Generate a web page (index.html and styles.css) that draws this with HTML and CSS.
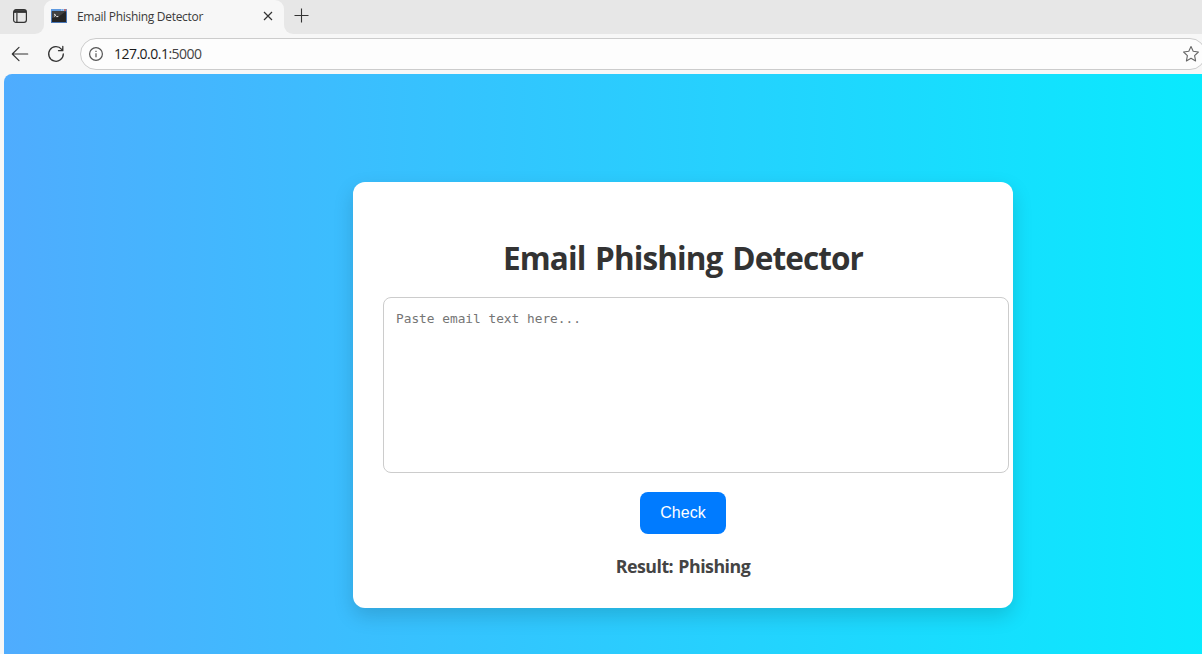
FILE: index.html
```
<!DOCTYPE html>
<html lang="en">
<head>
<meta charset="utf-8">
<title>Email Phishing Detector</title>
<link rel="stylesheet" href="styles.css">
</head>
<body>
<header class="tabstrip">
  <div class="tab-actions">
    <svg class="icon" width="16" height="16" viewBox="0 0 16 16" fill="none" stroke="#333" stroke-width="1.2"><rect x="1.6" y="1.6" width="12.8" height="12.8" rx="2.4"/><path d="M4.9 5v9.4"/><path d="M2 3.5h12" stroke-width="2.8"/></svg>
  </div>
  <div class="tab">
    <svg class="favicon" width="16" height="14" viewBox="0 0 16 14"><rect width="16" height="14" fill="#4a78b8"/><rect width="16" height="2.3" fill="#5f9ae0"/><path d="M10 .5h1.5v1H10zM12 .5h1v1h-1z" fill="#d5e5f8"/><path d="M13 .3h2.2v1.5H13z" fill="#d95b4c"/><rect x="1" y="2.3" width="14" height="10.7" fill="#252525"/><path d="M1 2.3h14L7 8 1 9z" fill="#414141"/><path d="M3 5l1.8 1.2L3 7.4M5.3 7.6h2" stroke="#fff" fill="none" stroke-width=".9"/></svg>
    <span class="tab-title">Email Phishing Detector</span>
    <svg class="close" width="10" height="10" viewBox="0 0 10 10" fill="none" stroke="#333" stroke-width="1.2"><path d="M1 1l8 8M9 1L1 9"/></svg>
  </div>
  <div class="new-tab">
    <svg class="icon" width="15" height="15" viewBox="0 0 15 15" fill="none" stroke="#333" stroke-width="1.1"><path d="M7.5 .5v14M.5 7.5h14"/></svg>
  </div>
</header>
<nav class="toolbar">
  <svg class="back" width="18" height="16" viewBox="0 0 18 16" fill="none" stroke="#333" stroke-width="1.2" stroke-linecap="round" stroke-linejoin="round"><path d="M8 1.4L1.3 8 8 14.6M1.3 8h15.4"/></svg>
  <svg class="reload" width="18" height="18" viewBox="0 0 18 18" fill="none" stroke="#333" stroke-width="1.3" stroke-linecap="round" stroke-linejoin="round"><path d="M16.3 9A7.3 7.3 0 1 1 14.6 4.3L15.8 5.6M15.8 1.4v4.3h-4.3"/></svg>
  <div class="address">
    <svg class="icon" width="14" height="14" viewBox="0 0 14 14" fill="none" stroke="#555" stroke-width="1.2"><circle cx="7" cy="7" r="6.4"/><path d="M7 6.2v4.1M7 3.7v1.3"/></svg>
    <span class="url">127.0.0.1<span class="port">:5000</span></span>
    <svg class="star" width="18" height="18" viewBox="0 0 18 18" fill="none" stroke="#666" stroke-width="1.1" stroke-linejoin="round"><path d="M9 1.6l2.2 4.7 5.2.7-3.8 3.6 1 5.3L9 13.3l-4.6 2.6 1-5.3L1.6 7l5.2-.7z"/></svg>
  </div>
</nav>
<main class="page">
  <section class="card">
    <h1>Email Phishing Detector</h1>
    <textarea placeholder="Paste email text here..."></textarea>
    <button class="check">Check</button>
    <p class="result">Result: Phishing</p>
  </section>
</main>
</body>
</html>
```
FILE: styles.css
```
* { box-sizing: border-box; }
body {
  margin: 0;
  height: 654px;
  overflow: hidden;
  background: #f7f7f7;
  font-family: "Open Sans", "Noto Sans", sans-serif;
}
svg { display: block; flex: none; }
.tabstrip {
  display: flex;
  height: 34px;
  background: linear-gradient(#e7e7e7 50%, #f7f7f7 50%);
}
.tab-actions {
  width: 44px;
  padding: 8px 0 0 12px;
  background: #e7e7e7;
  border-bottom-right-radius: 9px;
}
.tab {
  display: flex;
  align-items: center;
  width: 240px;
  padding: 0 11px 2px 7px;
  background: #f7f7f7;
  border-radius: 9px 9px 0 0;
}
.tab-title {
  flex: 1;
  margin-left: 10px;
  padding-top: 1px;
  font-size: 12px;
  letter-spacing: -0.3px;
  line-height: 16px;
  color: #3b3b3b;
  white-space: nowrap;
}
.new-tab {
  flex: 1;
  padding: 8px 0 0 10px;
  background: #e7e7e7;
  border-bottom-left-radius: 9px;
}
.toolbar {
  display: flex;
  align-items: center;
  height: 40px;
  padding-left: 11px;
}
.reload { margin-left: 18px; }
.address {
  display: flex;
  flex: none;
  align-items: center;
  width: 1126px;
  height: 32px;
  margin-left: 15px;
  padding-left: 8px;
  border: 1px solid #ccc;
  border-radius: 16px;
  background: #fdfdfd;
}
.url {
  width: 1068px;
  margin-left: 11px;
  font-size: 14px;
  letter-spacing: -0.52px;
  line-height: 20px;
  color: #1b1b1b;
}
.port { color: #444; }
.page {
  height: 580px;
  margin-left: 4px;
  padding: 108px 0 0 349px;
  border-top-left-radius: 8px;
  background: linear-gradient(to right, #4facfe, #00f2fe) 0 0 / 1358px 100% no-repeat;
}
.card {
  display: flex;
  flex-direction: column;
  width: 660px;
  height: 426px;
  padding: 54px 30px 0;
  border-radius: 12px;
  background: #fff;
  box-shadow: 0 8px 20px rgba(0, 0, 0, 0.15);
}
h1 {
  margin: 0 0 18px;
  font-size: 31.5px;
  font-weight: 700;
  line-height: 43px;
  letter-spacing: -0.9px;
  word-spacing: 2.5px;
  text-align: center;
  white-space: nowrap;
  color: #333;
}
textarea {
  flex: none;
  width: 626px;
  height: 176px;
  padding: 13px 12px;
  border: 1px solid #ccc;
  border-radius: 8px;
  background: #fff;
  font-family: "DejaVu Sans Mono", monospace;
  font-size: 12.8px;
  line-height: 16px;
  resize: none;
}
textarea::placeholder { color: #757575; }
.check {
  align-self: center;
  width: 86px;
  height: 42px;
  margin-top: 19px;
  padding: 0;
  border: 0;
  border-radius: 8px;
  background: #007bff;
  color: #fff;
  font-family: "Liberation Sans", Arial, sans-serif;
  font-size: 16px;
}
.result {
  margin: 20px 0 0;
  font-size: 17.8px;
  font-weight: 700;
  line-height: 24px;
  letter-spacing: -0.5px;
  word-spacing: 1px;
  text-align: center;
  color: #444;
}
```
